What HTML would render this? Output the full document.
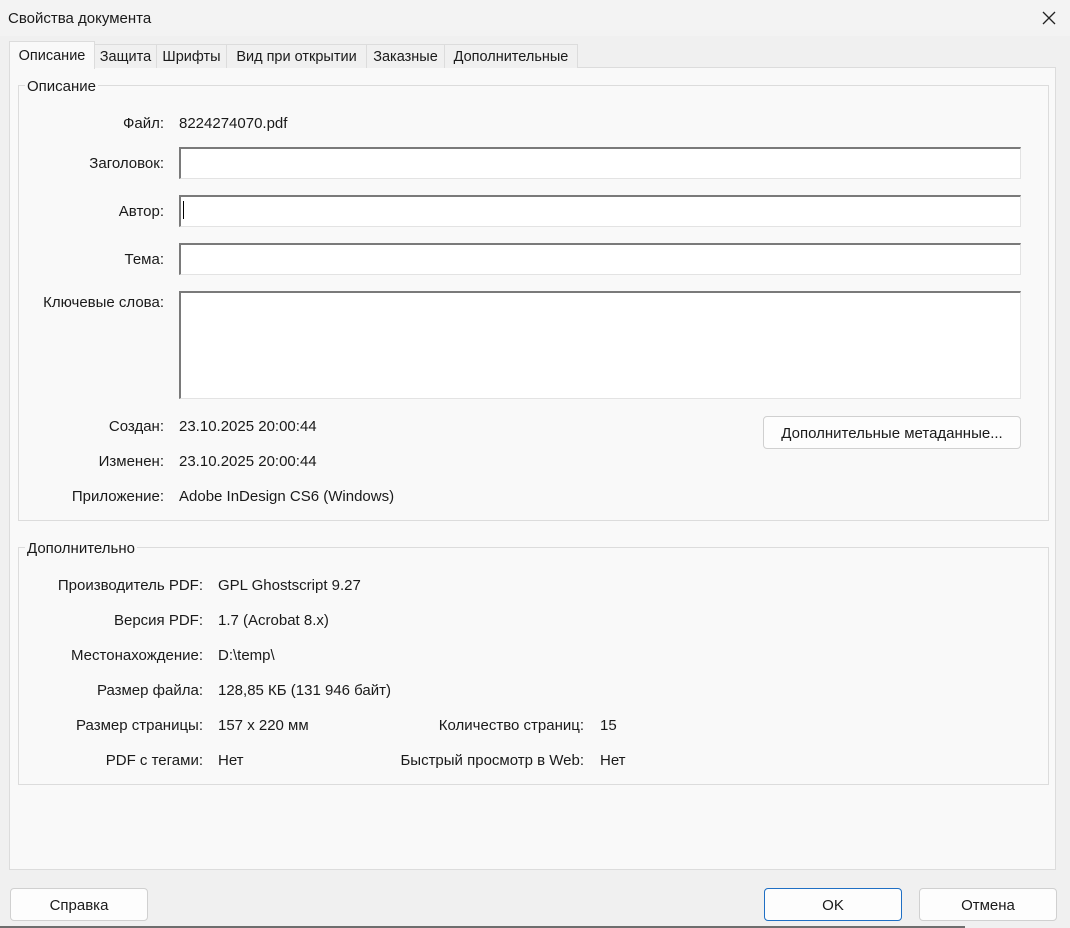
<!DOCTYPE html>
<html><head><meta charset="utf-8"><style>
body{margin:0;width:1070px;height:928px;background:#f0f0f0;font-family:"Liberation Sans",sans-serif;font-size:15px;color:#1a1a1a;position:relative;overflow:hidden}
.a{position:absolute;white-space:nowrap;line-height:18px}
.r{text-align:right}
.tab{position:absolute;top:44px;height:24px;border:1px solid #dcdcdc;border-bottom:none;background:#f0f0f0;box-sizing:border-box;text-align:center;line-height:25px;font-size:14.5px}
.inp{position:absolute;left:179px;width:842px;height:32px;box-sizing:border-box;background:#fff;border-top:2px solid #7a7a7a;border-left:2px solid #7a7a7a;border-right:1px solid #e3e3e3;border-bottom:1px solid #e3e3e3}
.grp{position:absolute;border:1px solid #dcdcdc;box-sizing:border-box}
.leg{position:absolute;background:#f9f9f9;padding:0 2px;line-height:18px}
.btn{position:absolute;height:33px;box-sizing:border-box;background:#fdfdfd;border:1px solid #d0d0d0;border-radius:4px;text-align:center;line-height:33px}
</style></head><body>
<div class="a" style="left:0;top:0;width:1070px;height:36px;background:#f3f3f3"></div>
<div class="a" style="left:8px;top:10px">Свойства документа</div>
<svg class="a" style="left:1042px;top:11px" width="14" height="14"><path d="M1 1L13 13M13 1L1 13" stroke="#222" stroke-width="1.3"/></svg>

<div class="a" style="left:9px;top:67px;width:1047px;height:803px;background:#f9f9f9;border:1px solid #dcdcdc;box-sizing:border-box"></div>
<div class="tab" style="left:94px;width:63px">Защита</div>
<div class="tab" style="left:156px;width:71px">Шрифты</div>
<div class="tab" style="left:226px;width:141px">Вид при открытии</div>
<div class="tab" style="left:366px;width:79px">Заказные</div>
<div class="tab" style="left:444px;width:134px">Дополнительные</div>
<div class="tab" style="left:9px;top:41px;width:86px;height:28px;background:#f9f9f9;line-height:29px;border-color:#dcdcdc">Описание</div>

<div class="grp" style="left:18px;top:85px;width:1031px;height:436px"></div>
<div class="leg" style="left:25px;top:78px">Описание</div>
<div class="a r" style="left:0;width:164px;top:115px">Файл:</div><div class="a" style="left:179px;top:115px">8224274070.pdf</div>
<div class="a r" style="left:0;width:164px;top:155px">Заголовок:</div><div class="inp" style="top:147px"></div>
<div class="a r" style="left:0;width:164px;top:203px">Автор:</div><div class="inp" style="top:195px"></div>
<div class="a" style="left:183px;top:201px;width:1px;height:18px;background:#000"></div>
<div class="a r" style="left:0;width:164px;top:251px">Тема:</div><div class="inp" style="top:243px"></div>
<div class="a r" style="left:0;width:164px;top:294px">Ключевые слова:</div><div class="inp" style="top:291px;height:108px"></div>
<div class="a r" style="left:0;width:164px;top:418px">Создан:</div><div class="a" style="left:179px;top:418px">23.10.2025 20:00:44</div>
<div class="a r" style="left:0;width:164px;top:453px">Изменен:</div><div class="a" style="left:179px;top:453px">23.10.2025 20:00:44</div>
<div class="a r" style="left:0;width:164px;top:488px">Приложение:</div><div class="a" style="left:179px;top:488px">Adobe InDesign CS6 (Windows)</div>
<div class="btn" style="left:763px;top:416px;width:258px">Дополнительные метаданные...</div>

<div class="grp" style="left:18px;top:547px;width:1031px;height:238px"></div>
<div class="leg" style="left:25px;top:540px">Дополнительно</div>
<div class="a r" style="left:0;width:203px;top:577px">Производитель PDF:</div><div class="a" style="left:218px;top:577px">GPL Ghostscript 9.27</div>
<div class="a r" style="left:0;width:203px;top:612px">Версия PDF:</div><div class="a" style="left:218px;top:612px">1.7 (Acrobat 8.x)</div>
<div class="a r" style="left:0;width:203px;top:647px">Местонахождение:</div><div class="a" style="left:218px;top:647px">D:\temp\</div>
<div class="a r" style="left:0;width:203px;top:682px">Размер файла:</div><div class="a" style="left:218px;top:682px">128,85 КБ (131 946 байт)</div>
<div class="a r" style="left:0;width:203px;top:717px">Размер страницы:</div><div class="a" style="left:218px;top:717px">157 x 220 мм</div>
<div class="a r" style="left:0;width:203px;top:752px">PDF с тегами:</div><div class="a" style="left:218px;top:752px">Нет</div>
<div class="a r" style="left:300px;width:284px;top:717px">Количество страниц:</div><div class="a" style="left:600px;top:717px">15</div>
<div class="a r" style="left:300px;width:284px;top:752px">Быстрый просмотр в Web:</div><div class="a" style="left:600px;top:752px">Нет</div>

<div class="btn" style="left:10px;top:888px;width:138px">Справка</div>
<div class="btn" style="left:764px;top:888px;width:138px;border-color:#1f6fc4">OK</div>
<div class="btn" style="left:919px;top:888px;width:138px">Отмена</div>
<div class="a" style="left:0;top:926px;width:965px;height:2px;background:#6e6e6e"></div>
</body></html>
